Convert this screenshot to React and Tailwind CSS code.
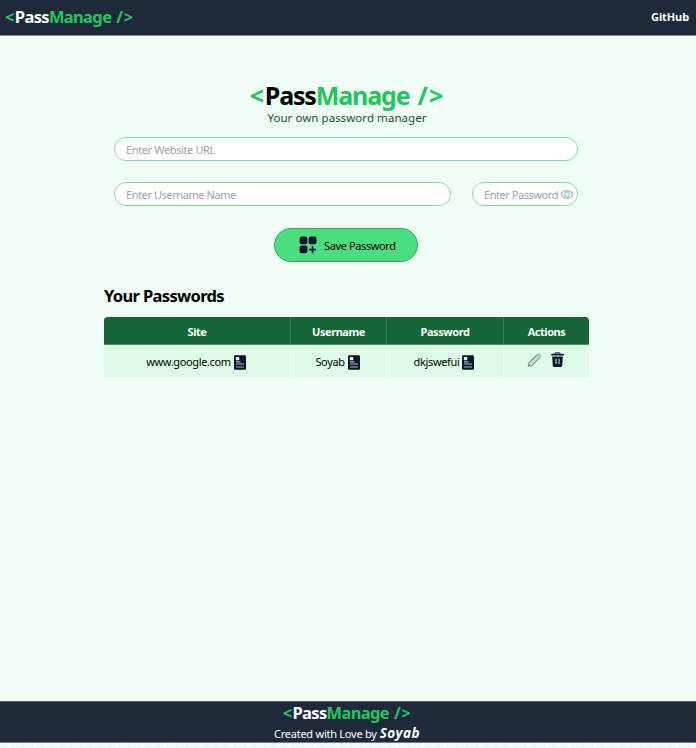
import React from "react";

function Logo({ large = false, className, nameClass }) {
  return (
    <div
      className={`flex font-bold whitespace-nowrap text-[#22c55e] ${
        large ? "text-[25px] leading-[30px] tracking-[-1.2px]" : "text-[16.5px] leading-[22px] tracking-[-0.65px]"
      } ${className}`}
    >
      <span className={large ? "mr-[2px]" : "mr-[1px]"}>&lt;</span>
      <span className={nameClass}>Pass</span>
      <span className={large ? "tracking-[-1.1px]" : ""}>Manage</span>
      <span className={large ? "ml-[8px] tracking-[1px]" : "ml-[5px] tracking-[0.5px]"}>/&gt;</span>
    </div>
  );
}

function CopyIcon() {
  return (
    <svg className="ml-[3px] h-[15px] w-[12px] shrink-0" viewBox="0 0 12 15">
      <rect x="0" y="0.2" width="12" height="14.6" rx="1.3" fill="#121331" />
      <rect x="1.8" y="2" width="3.5" height="3.2" rx="0.8" fill="#dcfce7" />
      <path d="M2 6.9h4.5M2 9h8M2 12h8" stroke="#a3bdb8" strokeWidth="1.2" />
    </svg>
  );
}

function EyeIcon() {
  return (
    <svg className="h-[11px] w-[14px] shrink-0" viewBox="0 0 14 11">
      <ellipse cx="7" cy="5.5" rx="5.7" ry="3.7" fill="#e8f2f1" stroke="#b9bfc5" strokeWidth="1.6" />
      <circle cx="7" cy="5.5" r="2.4" fill="#d5f3eb" stroke="#a9dcd3" strokeWidth="1.4" />
    </svg>
  );
}

function GridPlusIcon() {
  return (
    <svg className="h-[18px] w-[18px] shrink-0" viewBox="0 0 18 18" fill="#121331">
      <rect x="0.6" y="0.6" width="7.8" height="7.6" rx="2" />
      <rect x="9.7" y="0.6" width="7.8" height="7.6" rx="2" />
      <rect x="0.6" y="9.6" width="7.8" height="7.6" rx="2" />
      <path d="M13.6 10.2v7M10.1 13.7h7" stroke="#121331" strokeWidth="1.7" />
    </svg>
  );
}

function PencilIcon() {
  return (
    <svg className="h-[16px] w-[15px]" viewBox="0 0 15 16" fill="none" strokeLinejoin="round">
      <path d="M1.4 14l1-3.5L10.3 2.8l2.7 2.5-7.9 7.8z" stroke="#82928f" strokeWidth="1.3" />
      <path d="M4 11.5l6.5-6.5" stroke="#a3b8b0" strokeWidth="0.9" />
      <path d="M10 3l1.2-1.2q.8-.5 1.4 0l1.2 1.2q.5.7 0 1.3l-1.1 1.2z" fill="#8adccb" stroke="#86cfc0" strokeWidth="0.7" />
    </svg>
  );
}

function TrashIcon() {
  return (
    <svg className="h-[16px] w-[13px]" viewBox="0 0 13 16">
      <path d="M4.2 1.8V.9h4.6v.9" fill="none" stroke="#121331" strokeWidth="1" />
      <rect x="0.2" y="1.7" width="12.6" height="1.9" rx="0.5" fill="#121331" />
      <path d="M1.2 4.4h10.6l-.6 9q-.2 1.6-1.6 1.6H3.4q-1.4 0-1.6-1.6z" fill="#121331" />
      <path d="M5 6.7v5.2M8 6.7v5.2" stroke="#b5d3c4" strokeWidth="1.2" />
    </svg>
  );
}

const field =
  "flex h-[24px] items-center rounded-full border border-[#86dba5] bg-white pt-[3px] text-[11px] tracking-[-0.37px] text-[#9ca3af] whitespace-nowrap";
const headCell = "flex items-center justify-center border-r border-[#397d52] pt-[3px]";
const cell = "flex items-center justify-center border-r border-[#f0fdf4] pt-[2px] pr-[2px]";

export default function App() {
  return (
    <div className="flex h-[748px] w-[696px] flex-col overflow-hidden bg-[#f0fdf4] font-['Noto_Sans','Open_Sans',sans-serif] text-black">
      <header className="flex h-[36px] shrink-0 items-center justify-between border-b border-[#8b9698] bg-[#1e293b] pr-[7px] pl-[5px]">
        <Logo className="pb-[2px]" nameClass="text-white" />
        <span className="text-[11px] font-bold tracking-[-0.1px] text-white">GitHub</span>
      </header>

      <main className="flex grow flex-col">
        <div className="flex flex-col items-center pt-[44px] pr-[2px]">
          <Logo large className="h-[30px]" nameClass="text-black" />
          <p className="mt-px h-[16px] text-[11.5px] leading-[13px] tracking-[0.05px] text-[#14532d]">Your own password manager</p>
        </div>

        <div className="mt-[10px] ml-[114px] flex w-[464px] flex-col items-center">
          <div className={`${field} w-full pl-[11px]`}>
            <span>Enter Website URL</span>
          </div>
          <div className="mt-[21px] flex w-full justify-between">
            <div className={`${field} w-[337px] pl-[11px]`}>
              <span className="tracking-[-0.42px]">Enter Username Name</span>
            </div>
            <div className={`${field} w-[106px] justify-between pr-[3px] pl-[11px]`}>
              <span className="tracking-[-0.45px]">Enter Password</span>
              <span className="pb-[2px]"><EyeIcon /></span>
            </div>
          </div>
          <button className="mt-[22px] flex h-[34px] w-[144px] items-center rounded-full border border-[#3da663] bg-[#4ade80] pl-[24px] text-[11px] whitespace-nowrap">
            <GridPlusIcon />
            <span className="ml-[7px] pt-[3px] tracking-[-0.38px]">Save Password</span>
          </button>
        </div>

        <section className="mt-[22px] ml-[104px] w-[485px]">
          <h2 className="h-[33px] text-[16.5px] leading-[24px] font-bold tracking-[-0.65px]">Your Passwords</h2>
          <div className="overflow-hidden rounded-t-[4px] text-[11px]">
            <div className="grid h-[28px] grid-cols-[187px_96px_117px_85px] border-b border-[#4b8c62] bg-[#166534] font-bold tracking-[-0.45px] text-white">
              <div className={headCell}>Site</div>
              <div className={headCell}>Username</div>
              <div className={headCell}>Password</div>
              <div className="flex items-center justify-center pt-[3px]">Actions</div>
            </div>
            <div className="grid h-[32px] grid-cols-[187px_96px_117px_85px] bg-[#dcfce7] tracking-[-0.36px]">
              <div className={cell}><span>www.google.com</span><CopyIcon /></div>
              <div className={cell}><span>Soyab</span><CopyIcon /></div>
              <div className={cell}><span>dkjswefui</span><CopyIcon /></div>
              <div className="flex items-center justify-center gap-[9px] pr-[2px] pb-[3px]"><PencilIcon /><TrashIcon /></div>
            </div>
          </div>
        </section>
      </main>

      <footer className="flex h-[42px] shrink-0 flex-col items-center border-y border-t-[#64706f] border-b-[#77807f] bg-[#1e293b] pr-[2px] text-white">
        <Logo className="h-[23px]" nameClass="text-white" />
        <div className="flex h-[18px] items-baseline text-[11px] leading-[18px] whitespace-nowrap">
          <span className="tracking-[-0.25px]">Created with Love by</span>
          <span className="ml-[3px] text-[13.5px] font-bold tracking-[0.5px] italic">Soyab</span>
        </div>
      </footer>
      <div className="h-[5px] shrink-0 bg-[linear-gradient(to_right,#8080800d_1px,transparent_1px)] bg-[size:9.67px_17px] bg-[position:3px_0]" />
    </div>
  );
}
